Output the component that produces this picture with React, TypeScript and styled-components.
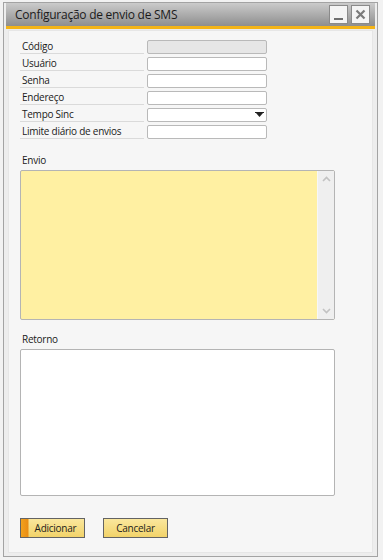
import React from "react";
import styled, { createGlobalStyle } from "styled-components";

const Global = createGlobalStyle`
  html, body { margin: 0; padding: 0; }
  body {
    background: #f2f2f2;
    font-family: "Open Sans", "Liberation Sans", sans-serif;
    width: 383px;
    height: 560px;
    overflow: hidden;
  }
`;

const Page = styled.div`
  padding: 2px 5px 0 3px;
`;

const Window = styled.div`
  width: 375px;
  height: 555px;
  box-sizing: border-box;
  border: 1px solid #a3a3a3;
  background: #ededed;
  padding: 0 2px 3px 2px;
  display: flex;
  flex-direction: column;
`;

const TitleBar = styled.div`
  height: 23px;
  border-bottom: 3px solid #f4b417;
  background: linear-gradient(#cbcbcb, #8e8e8e);
  display: flex;
  align-items: center;
  padding: 0 5px 0 9px;
`;

const Title = styled.div`
  flex: 1;
  font-size: 12px;
  color: #1b1b1b;
  letter-spacing: -0.25px;
`;

const WinButton = styled.div`
  width: 17px;
  height: 17px;
  margin-left: 3px;
  border: 1px solid #8a8a8a;
  background: #f4f4f4;
  display: flex;
  align-items: center;
  justify-content: center;
`;

const Body = styled.div`
  flex: 1;
  padding: 1px 2px 0 2px;
  display: flex;
`;

const Panel = styled.div`
  flex: 1;
  border: 1px solid #e6e6e6;
  background: #f6f6f6;
  padding: 9px 0 0 11px;
  display: flex;
  flex-direction: column;
  font-family: "Open Sans", "Liberation Sans", sans-serif;
  font-size: 10px;
  letter-spacing: -0.25px;
  color: #1a1a1a;
`;

const Form = styled.div`
  display: grid;
  grid-template-columns: 124px 120px;
  column-gap: 3px;
  row-gap: 3px;
`;

const Label = styled.div`
  height: 14px;
  box-sizing: border-box;
  border-bottom: 1px solid #dadada;
  padding-left: 2px;
  display: flex;
  align-items: center;
  line-height: 13px;
`;

const Field = styled.div<{ $disabled?: boolean }>`
  height: 14px;
  box-sizing: border-box;
  border: 1px solid #b9b9b9;
  border-radius: 2px;
  background: ${(p) => (p.$disabled ? "#e6e6e6" : "#ffffff")};
  display: flex;
  align-items: center;
  justify-content: flex-end;
  padding-right: 2px;
`;

const SectionLabel = styled.div<{ $top: number }>`
  margin-top: ${(p) => p.$top}px;
  padding-left: 2px;
  height: 14px;
  line-height: 14px;
`;

const TextBox = styled.div<{ $h: number; $yellow?: boolean }>`
  width: 315px;
  height: ${(p) => p.$h}px;
  box-sizing: border-box;
  margin-top: 3px;
  border: 1px solid #b4b4b4;
  border-radius: 2px;
  background: ${(p) => (p.$yellow ? "#fff0a2" : "#ffffff")};
  display: flex;
  justify-content: flex-end;
`;

const ScrollBar = styled.div`
  width: 16px;
  background: #efefef;
  border-left: 1px solid #f7f7f7;
  display: flex;
  flex-direction: column;
  justify-content: space-between;
  align-items: center;
  padding: 5px 0 5px;
`;

const Buttons = styled.div`
  margin-top: 22px;
  display: flex;
  gap: 18px;
`;

const Button = styled.div<{ $primary?: boolean }>`
  width: 65px;
  height: 20px;
  box-sizing: border-box;
  border: 1px solid #636363;
  background: ${(p) =>
    p.$primary
      ? "linear-gradient(90deg, #f2a21d 0, #ea8d14 7px, transparent 8px), linear-gradient(#fae79d, #f2d36a)"
      : "linear-gradient(#fae79d, #f2d36a)"};
  display: flex;
  align-items: center;
  justify-content: center;
  padding-left: ${(p) => (p.$primary ? "6px" : "0")};
  font-size: 10px;
  color: #1c1c1c;
`;

const Chevron = ({ up }: { up?: boolean }) => (
  <svg width="9" height="6" viewBox="0 0 9 6">
    <path
      d={up ? "M1 5 L4.5 1.5 L8 5" : "M1 1 L4.5 4.5 L8 1"}
      fill="none"
      stroke="#c2c2c2"
      strokeWidth="1.6"
    />
  </svg>
);

const rows: { label: string; disabled?: boolean; select?: boolean }[] = [
  { label: "Código", disabled: true },
  { label: "Usuário" },
  { label: "Senha" },
  { label: "Endereço" },
  { label: "Tempo Sinc", select: true },
  { label: "Limite diário de envios" },
];

export default function App() {
  return (
    <>
      <Global />
      <Page>
        <Window>
          <TitleBar>
            <Title>Configuração de envio de SMS</Title>
            <WinButton>
              <svg width="17" height="17" viewBox="0 0 17 17">
                <rect x="4" y="12" width="9" height="2" fill="#6e6e6e" />
              </svg>
            </WinButton>
            <WinButton>
              <svg width="17" height="17" viewBox="0 0 17 17">
                <path d="M4.5 4.5 L12.5 12.5 M12.5 4.5 L4.5 12.5" stroke="#7a7a7a" strokeWidth="2.2" />
              </svg>
            </WinButton>
          </TitleBar>
          <Body>
            <Panel>
              <Form>
                {rows.map((r) => (
                  <React.Fragment key={r.label}>
                    <Label>{r.label}</Label>
                    <Field $disabled={r.disabled}>
                      {r.select && (
                        <svg width="9" height="6" viewBox="0 0 9 6">
                          <path d="M0 0 H9 V1 H0 Z M1 1 H8 L4.5 5 Z" fill="#222" />
                        </svg>
                      )}
                    </Field>
                  </React.Fragment>
                ))}
              </Form>
              <SectionLabel $top={14}>Envio</SectionLabel>
              <TextBox $h={150} $yellow>
                <ScrollBar>
                  <Chevron up />
                  <Chevron />
                </ScrollBar>
              </TextBox>
              <SectionLabel $top={12}>Retorno</SectionLabel>
              <TextBox $h={147} />
              <Buttons>
                <Button $primary>Adicionar</Button>
                <Button>Cancelar</Button>
              </Buttons>
            </Panel>
          </Body>
        </Window>
      </Page>
    </>
  );
}
